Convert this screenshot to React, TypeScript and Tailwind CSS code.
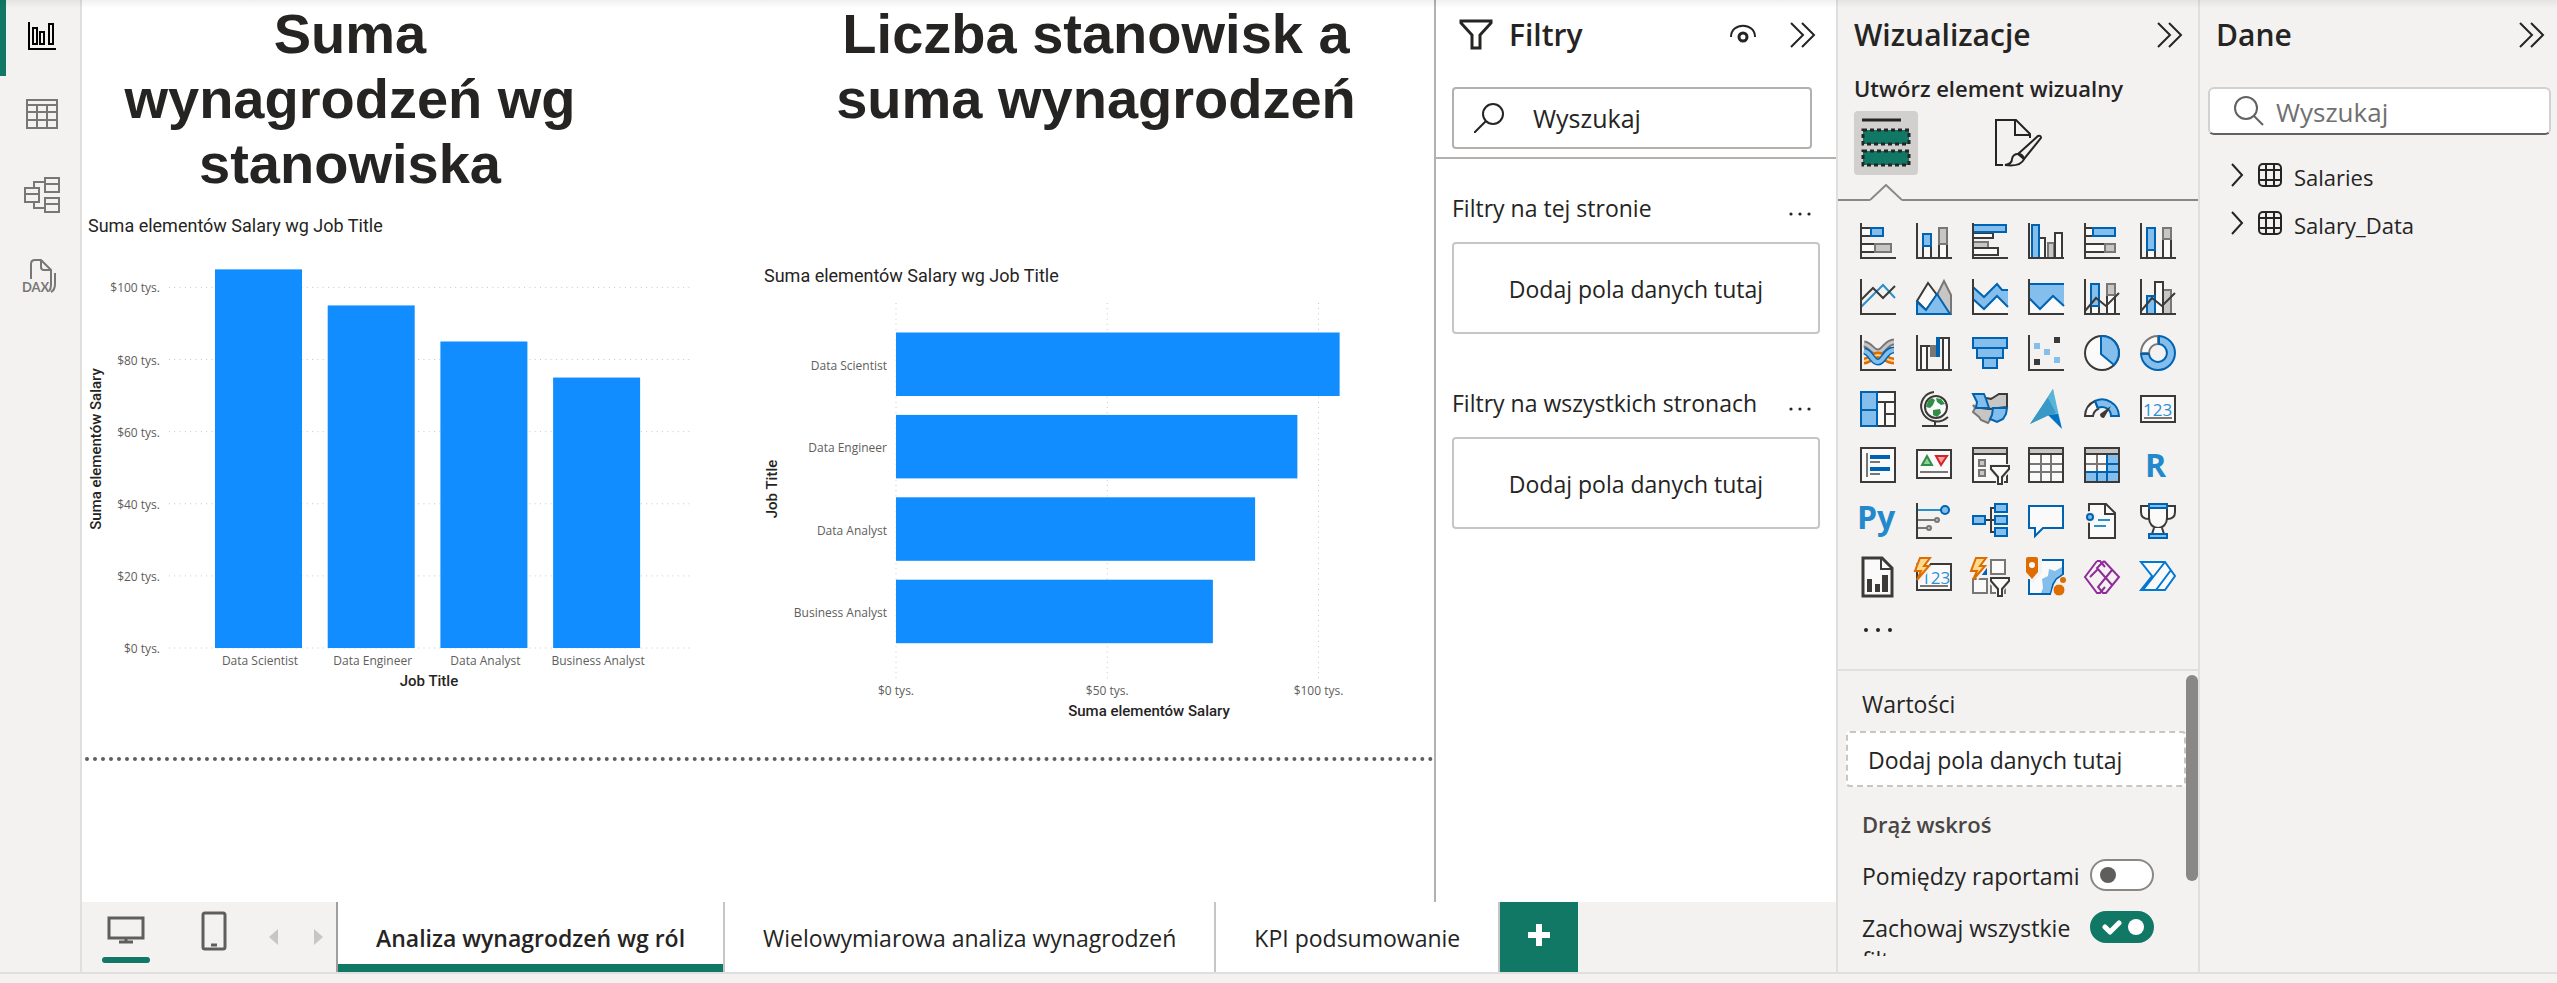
import React from "react";

const DARK = "#3b3a38";
const BLUE = "#0063b1";
const SKY = "#83beec";
const GREY = "#797775";
const SILVER = "#c8c6c4";
const WHITE = "#fafafa";

type Box = [number, number, number, number];

function R({ b, s = DARK, f = WHITE }: { b: Box; s?: string; f?: string }) {
  return <rect x={b[0]} y={b[1]} width={b[2]} height={b[3]} stroke={s} fill={f} strokeWidth={2} />;
}

function L({ d, s = DARK, f = "none", w = 2 }: { d: string; s?: string; f?: string; w?: number }) {
  return <path d={d} stroke={s} fill={f} strokeWidth={w} />;
}

const Axis = () => <L d="M1 0V35H36" />;

const Bolt = () => (
  <>
    <path d="M3 -3H19L13 6H17L4 24L6 12H-2Z" fill="#f3f2f1" />
    <L d="M4 -1H14L8 7H13L1 21L5 12H-1Z" s="#de6c00" f="#ffd98c" />
  </>
);

const Funnel = () => (
  <>
    <path d="M17 17H39V24L32 31V39H24V31L17 24Z" fill="#f3f2f1" />
    <L d="M19 19H37V22L30 30V37H26V30L19 22Z" f={WHITE} />
  </>
);

const Digits = ({ x = 3 }: { x?: number }) => (
  <text x={x} y={25} fill="#2b8fd6" className="font-['Open_Sans',sans-serif] text-[17px]">
    123
  </text>
);

const visuals: [string, React.ReactNode][] = [
  ["Skumulowany wykres słupkowy", <><R b={[1, 5, 10, 8]} /><R b={[11, 5, 12, 8]} s={BLUE} f={SKY} /><R b={[1, 21, 14, 8]} /><R b={[15, 21, 16, 8]} s={GREY} f={SILVER} /><Axis /></>],
  ["Skumulowany wykres kolumnowy", <><R b={[7, 23, 8, 12]} /><R b={[7, 11, 8, 12]} s={BLUE} f={SKY} /><R b={[23, 21, 8, 14]} /><R b={[23, 5, 8, 16]} s={GREY} f={SILVER} /><Axis /></>],
  ["Grupowany wykres słupkowy", <><R b={[1, 10, 20, 5]} /><R b={[1, 19, 15, 6]} s={GREY} f={SILVER} /><R b={[1, 25, 25, 7]} /><R b={[1, 2, 33, 7]} s={BLUE} f={SKY} /><Axis /></>],
  ["Grupowany wykres kolumnowy", <><R b={[11, 15, 6, 20]} /><R b={[20, 20, 6, 15]} s={GREY} f={SILVER} /><R b={[27, 10, 7, 25]} /><R b={[4, 2, 7, 33]} s={BLUE} f={SKY} /><Axis /></>],
  ["Wykres słupkowy 100%", <><R b={[1, 5, 8, 8]} /><R b={[9, 5, 22, 8]} s={BLUE} f={SKY} /><R b={[1, 21, 20, 8]} /><R b={[21, 21, 10, 8]} s={GREY} f={SILVER} /><Axis /></>],
  ["Wykres kolumnowy 100%", <><R b={[7, 27, 8, 8]} /><R b={[7, 5, 8, 22]} s={BLUE} f={SKY} /><R b={[23, 16, 8, 19]} /><R b={[23, 5, 8, 11]} s={GREY} f={SILVER} /><Axis /></>],

  ["Wykres liniowy", <><L d="M1 28L23 6L35 19" s="#2b8fc9" /><L d="M1 21L13 9L23 19L35 7" /><Axis /></>],
  ["Wykres warstwowy", <><L d="M20 18L28 2L35 16V35H20Z" s={GREY} f={SILVER} /><L d="M1 22L12 4L21 16L10 31Z" f={WHITE} /><L d="M1 23L10 31L21 15L34 35H1Z" s={BLUE} f={SKY} /></>],
  ["Skumulowany wykres warstwowy", <><path d="M1 21L12 30L25 17L36 28V35H1Z" fill={WHITE} /><path d="M1 8L12 18L25 5L30 11H36V28L25 17L12 30L1 21Z" fill={SKY} /><L d="M1 8L12 18L25 5L30 11H36M1 20L12 30L25 17L36 28" s={BLUE} /><Axis /></>],
  ["Wykres warstwowy 100%", <><path d="M1 19L12 30L25 17L36 27V35H1Z" fill={WHITE} /><path d="M1 5H36V27L25 17L12 30L1 19Z" fill={SKY} /><L d="M1 5H36M1 19L12 30L25 17L36 27" s={BLUE} /><Axis /></>],
  ["Wykres liniowy i skumulowany kolumnowy", <><R b={[7, 27, 8, 8]} /><R b={[7, 5, 8, 22]} s={BLUE} f={SKY} /><R b={[23, 16, 8, 19]} /><R b={[23, 5, 8, 11]} s={GREY} f={SILVER} /><L d="M1 32L12 19L22 27L35 14" /><Axis /></>],
  ["Wykres liniowy i grupowany kolumnowy", <><R b={[23, 11, 8, 24]} s={GREY} f={SILVER} /><R b={[15, 3, 8, 32]} /><R b={[7, 17, 8, 18]} s={BLUE} f={SKY} /><L d="M1 32L12 19L22 27L35 14" /><Axis /></>],

  ["Wykres wstążkowy", <><L d="M4 9C11 10 12 17 18 17S26 7 34 7" s={GREY} w={7} /><L d="M4 9C11 10 12 17 18 17S26 7 34 7" s={SILVER} w={3} /><L d="M4 26C10 26 12 20 18 20S26 26 34 26" s="#de6c00" w={7} /><L d="M4 26C10 26 12 20 18 20S26 26 34 26" s="#ffd08a" w={2} /><L d="M4 16C11 17 12 27 18 27S25 15 34 15" s={BLUE} w={7} /><L d="M4 16C11 17 12 27 18 27S25 15 34 15" s={SKY} w={4} /><Axis /></>],
  ["Wykres kaskadowy", <><R b={[5, 11, 6, 24]} /><L d="M4 11H15" /><rect x={14} y={10} width={6} height={12} fill={GREY} /><rect x={20} y={2} width={4} height={20} fill={BLUE} /><L d="M24 3H28" /><R b={[27, 3, 6, 32]} /><Axis /></>],
  ["Lejek", <><R b={[1, 3, 34, 10]} s={BLUE} f={SKY} /><R b={[5, 13, 26, 10]} s={BLUE} f={SKY} /><R b={[11, 23, 14, 10]} s={BLUE} f={SKY} /></>],
  ["Wykres punktowy", <><rect x={26} y={2} width={6} height={6} fill={DARK} /><rect x={6} y={8} width={6} height={6} fill={SKY} /><rect x={16} y={14} width={6} height={6} fill={SKY} /><rect x={26} y={22} width={6} height={6} fill={SKY} /><rect x={6} y={24} width={6} height={6} fill={DARK} /><Axis /></>],
  ["Wykres kołowy", <><circle cx={18} cy={18} r={17} fill={WHITE} stroke={DARK} strokeWidth={2} /><L d="M17 1V19L30 30A17 17 0 0 0 17 1Z" s={BLUE} f={SKY} /></>],
  ["Wykres pierścieniowy", <><L d="M1 18A17 17 0 0 1 18 1V9A9 9 0 0 0 9 18Z" s={GREY} f={WHITE} /><L d="M19 1A17 17 0 1 1 1 19H9A9 9 0 1 0 19 9Z" s={BLUE} f={SKY} /></>],

  ["Mapa drzewa", <><R b={[17, 1, 18, 10]} /><R b={[17, 11, 8, 24]} /><R b={[25, 11, 10, 12]} /><R b={[25, 23, 10, 12]} /><R b={[1, 1, 16, 18]} s={BLUE} f={SKY} /><R b={[1, 19, 16, 16]} s={BLUE} f={SKY} /></>],
  ["Mapa", <><circle cx={20} cy={16} r={11} fill={WHITE} stroke={DARK} strokeWidth={2} /><path d="M12 10L16 7L19 9L17 14L14 17L10 16ZM20 7L25 8L29 13L25 14L21 11ZM17 19L24 18L25 22L21 26L17 24Z" fill="#2f8f46" /><L d="M18 1C8 2 3 12 6 20C9 29 22 35 32 26M19 31V34M6 35H32" /></>],
  ["Kartogram", <><L d="M1 14L6 17L18 16L14 8L26 7L27 3H35V16L32 24L20 26L16 32L9 29L7 26L1 21L3 17Z" f={SILVER} s={GREY} /><L d="M14 7L19 8L27 3H35V16L17 18L9 17" f={SILVER} /><L d="M1 3H12L14 8L17 17H4L5 11Z" s={BLUE} f={SKY} /><L d="M21 17H35L34 23L31 28L25 31L18 28L20 24Z" s={BLUE} f={SKY} /></>],
  ["Mapa platformy Azure", <><path d="M25 -2L2 33L21 24Z" fill="#3999c6" /><path d="M25 -2L34 38L20 7Z" fill="#59b4d9" /><path d="M25 -2L20 7L21 24L30 30Z" fill="#59b4d9" /><path d="M30 23L34 38L20 24Z" fill="#0072c6" /><path d="M20 7L2 33L21 24L28 22Z" fill="#3999c6" /></>],
  ["Miernik", <><L d="M1 25A17 17 0 0 1 11 10L14 18A9 9 0 0 0 9 25Z" f={WHITE} /><L d="M11 10A17 17 0 0 1 35 25H27A9 9 0 0 0 14 17Z" s={BLUE} f={SKY} /><path d="M16 23L27 15L20 27Q16 27 16 23Z" fill={DARK} /></>],
  ["Karta", <><R b={[1, 5, 34, 26]} /><Digits /><L d="M4 27H32" s={GREY} /></>],

  ["Karta z wieloma wierszami", <><R b={[1, 1, 34, 34]} /><L d="M7 6V30M10 15H20M10 27H20" s={GREY} /><L d="M10 10H30M10 22H30" s={BLUE} w={4} /></>],
  ["Kluczowy wskaźnik wydajności", <><R b={[1, 3, 34, 28]} /><L d="M6 18L11 9L16 18Z" s="#2f8f46" f="#8fcf9a" /><L d="M20 9H31L25 18Z" s="#d3262b" f="#f5a3a0" /><L d="M4 25H32" s={GREY} /></>],
  ["Fragmentator", <><R b={[1, 1, 34, 34]} /><rect x={2} y={2} width={32} height={5} fill={SILVER} /><L d="M1 7H35" /><R b={[7, 13, 6, 6]} s={GREY} f={SILVER} /><R b={[7, 23, 6, 6]} s={GREY} f={SILVER} /><Funnel /></>],
  ["Tabela", <><R b={[1, 1, 34, 34]} /><rect x={2} y={2} width={32} height={5} fill={SILVER} /><L d="M13 8V34M23 8V34M2 17H34M2 25H34" s={GREY} /><L d="M1 7H35" /></>],
  ["Macierz", <><R b={[1, 1, 34, 34]} /><rect x={2} y={2} width={32} height={5} fill={SILVER} /><path d="M23 8H34V34H2V25H23Z" fill={SKY} /><L d="M13 8V25M2 17H23" s={GREY} /><L d="M23 8V34M2 25H34M13 25V34M23 17H34" s={BLUE} /><L d="M1 7H35" /><rect x={1} y={1} width={34} height={34} fill="none" stroke={DARK} strokeWidth={2} /></>],
  ["Skrypt R", <text x={5} y={30} fill="#2189cc" className="font-['Open_Sans',sans-serif] text-[32px] font-bold">R</text>],

  ["Skrypt Python", <text x={-3} y={26} fill="#2189cc" className="font-['Open_Sans',sans-serif] text-[32px] font-bold">Py</text>],
  ["Kluczowe elementy wpływające", <><L d="M1 7H25" s="#2b8fc9" /><L d="M1 17H20M1 25H12" s={GREY} /><circle cx={29} cy={7} r={4} fill={SKY} stroke={BLUE} strokeWidth={2} /><circle cx={21} cy={17} r={2} fill={SILVER} stroke={GREY} strokeWidth={2} /><circle cx={13} cy={25} r={2} fill={SILVER} stroke={GREY} strokeWidth={2} /><Axis /></>],
  ["Drzewo dekompozycji", <><L d="M14 17H22M22 5H19V29H22" /><R b={[1, 13, 12, 8]} s={BLUE} f={SKY} /><R b={[23, 1, 12, 8]} s={BLUE} f={SKY} /><R b={[23, 13, 12, 8]} s={BLUE} f={SKY} /><R b={[23, 25, 12, 8]} s={BLUE} f={SKY} /></>],
  ["Pytania i odpowiedzi", <L d="M1 3H35V25H15L7 33V25H1Z" s={BLUE} f={WHITE} />],
  ["Narracja", <><L d="M5 1H22L31 10V35H5Z" f={WHITE} /><L d="M21 1V11H31" /><circle cx={6} cy={14} r={6} fill="#f3f2f1" /><circle cx={6} cy={14} r={3} fill={SKY} stroke={BLUE} strokeWidth={2} /><L d="M14 17H26M10 23H22" s="#2b8fc9" /></>],
  ["Metryki", <><L d="M9 3H1V9C1 14 4 16 9 16M27 3H35V9C35 14 32 16 27 16" f={WHITE} /><L d="M9 4V15C9 21 13 25 18 25S27 21 27 15V4Z" f={WHITE} /><L d="M14 25L12 31H24L22 25" f={WHITE} /><R b={[9, 1, 18, 4]} s={BLUE} f={SKY} /><R b={[9, 31, 18, 4]} s={BLUE} f={SKY} /></>],

  ["Raport podzielony na strony", <><L d="M3 -1H22L32 9V37H3Z" f={WHITE} w={3} /><L d="M21 -1V10H32" /><path d="M7 20H12V33H7ZM15 25H20V33H15ZM22 16H28V33H22Z" fill={DARK} /></>],
  ["Karta (nowa)", <><R b={[1, 5, 34, 26]} /><Digits x={5} /><L d="M4 27H32" s={GREY} /><Bolt /></>],
  ["Fragmentator (nowy)", <><R b={[19, 1, 14, 14]} s={GREY} /><R b={[1, 20, 14, 14]} s={GREY} /><R b={[19, 20, 14, 14]} s={GREY} /><rect x={8} y={6} width={7} height={10} fill={BLUE} /><Bolt /><Funnel /></>],
  ["ArcGIS Maps", <><L d="M12 1H35V15L28 20L25 25L22 35H1V20" s={BLUE} f={WHITE} /><path d="M34 8V15L28 19L24 25L22 34H13L15 29L14 20L20 17L21 10L27 12Z" fill={SKY} /><path d="M-3 -3H14V14L5 24L-3 15Z" fill="#f3f2f1" /><path d="M-2 0Q-2 -2 0 -2H8Q10 -2 10 0V13L4 20L-2 13Z" fill="#de6c00" /><circle cx={4} cy={6} r={3} fill={WHITE} /><circle cx={31} cy={31} r={6} fill="#de6c00" stroke="#f3f2f1" strokeWidth={1} /><circle cx={35} cy={21} r={3} fill="#de6c00" /></>],
  ["Power Apps", <><L d="M13 2L1 18L13 34H16L21 28M13 2H16L21 8" s="#8e2c98" f="none" /><L d="M20 2L35 18L22 34H19L14 28L28 11M20 2L13 9L28 26M14 10L6 18" s="#8e2c98" /></>],
  ["Power Automate", <L d="M1 3H25L35 17L25 31H1L12 17ZM25 3L3 31M31 11L16 31" s="#0078d4" f={WHITE} />],
];

const jobs = [
  { name: "Data Scientist", value: 105 },
  { name: "Data Engineer", value: 95 },
  { name: "Data Analyst", value: 85 },
  { name: "Business Analyst", value: 75 },
];

const tick = "font-['Open_Sans',sans-serif] text-[12px]";
const axisTitle = "font-['Roboto',sans-serif] text-[15px] font-medium";

function ColumnChart() {
  const y = (v: number) => 410 - v * 3.606;
  return (
    <svg className="block" width={640} height={462} role="img" aria-label="Suma elementów Salary wg Job Title">
      {[0, 20, 40, 60, 80, 100].map((v) => (
        <g key={v}>
          <line x1={87} x2={608} y1={y(v)} y2={y(v)} stroke="#c8c6c4" strokeDasharray="1 4.3" />
          <text x={78} y={y(v) + 5} textAnchor="end" fill="#605e5c" className={tick}>{`$${v} tys.`}</text>
        </g>
      ))}
      {jobs.map((j, i) => (
        <g key={j.name}>
          <rect x={133 + i * 112.7} y={y(j.value)} width={87} height={410 - y(j.value)} fill="#118dff" />
          <text x={178 + i * 112.7} y={427} textAnchor="middle" fill="#605e5c" className={tick}>{j.name}</text>
        </g>
      ))}
      <text x={347} y={448} textAnchor="middle" fill="#252423" className={axisTitle}>Job Title</text>
      <text transform="translate(19 211) rotate(-90)" textAnchor="middle" fill="#252423" className={axisTitle}>Suma elementów Salary</text>
    </svg>
  );
}

function BarChart() {
  const x = (v: number) => 138 + v * 4.225;
  return (
    <svg className="block" width={640} height={440} role="img" aria-label="Suma elementów Salary wg Job Title">
      {[0, 50, 100].map((v) => (
        <g key={v}>
          <line x1={x(v)} x2={x(v)} y1={15} y2={391} stroke="#c8c6c4" strokeDasharray="1 4.2" />
          <text x={x(v)} y={407} textAnchor="middle" fill="#605e5c" className={tick}>{`$${v} tys.`}</text>
        </g>
      ))}
      {jobs.map((j, i) => (
        <g key={j.name}>
          <rect x={138} y={44.5 + i * 82.4} width={x(j.value) - 138} height={63.5} fill="#118dff" />
          <text x={129} y={82 + i * 82.4} textAnchor="end" fill="#605e5c" className={tick}>{j.name}</text>
        </g>
      ))}
      <text x={391} y={428} textAnchor="middle" fill="#252423" className={axisTitle}>Suma elementów Salary</text>
      <text transform="translate(19 201) rotate(-90)" textAnchor="middle" fill="#252423" className={axisTitle}>Job Title</text>
    </svg>
  );
}

function Chevrons() {
  return (
    <svg width={26} height={26} viewBox="0 0 26 26" fill="none" stroke="#252423" strokeWidth={2}>
      <path d="M1 1L13 13L1 25M12 1L24 13L12 25" />
    </svg>
  );
}

function NavRail() {
  return (
    <nav className="flex w-[82px] shrink-0 flex-col border-r-2 border-[#e1dfdd] bg-[#f3f2f1]">
      <button aria-label="Widok raportu" className="flex h-[76px] items-center border-l-6 border-[#117865] pl-[22px]">
        <svg width={28} height={28} className="-mt-1" fill="none" stroke="#000" strokeWidth={2}>
          <path d="M1 0V27H28M5 6H9V22H5ZM12 10H16V22H12ZM21 2H25V22H21Z" />
        </svg>
      </button>
      <button aria-label="Widok tabeli" className="flex h-[76px] items-center pl-[26px]">
        <svg width={32} height={30} fill="none" stroke="#797775" strokeWidth={2}>
          <path d="M1 1H31V29H1ZM1 6H31M1 13H31M1 21H31M11 6V29M21 6V29" />
        </svg>
      </button>
      <button aria-label="Widok modelu" className="flex h-[86px] items-center pl-6">
        <svg width={36} height={36} fill="none" stroke="#797775" strokeWidth={2}>
          <path d="M1 11H15V25H1ZM1 17H15M21 1H35V15H21ZM21 7H35M21 21H35V35H21ZM21 27H35M10 10V5H21M10 26V31H21" />
        </svg>
      </button>
      <button aria-label="Widok zapytań DAX" className="flex h-[76px] items-center pl-[21px]">
        <svg width={38} height={40} fill="none" stroke="#797775" strokeWidth={2}>
          <path d="M10 23V8Q10 4 14 4H20L30 14V29Q30 33 28 35M20 4V11Q20 14 23 14H30M34 17V28Q34 34 30 36" />
          <text x={1} y={36} fill="#797775" stroke="none" className="font-['Lato',sans-serif] text-[13px] font-bold">DAX</text>
        </svg>
      </button>
    </nav>
  );
}

const heading = "text-center font-['Liberation_Sans',sans-serif] text-[56px] leading-[65px] font-bold text-[#252423] pt-px";
const chartTitle = "font-['Roboto',sans-serif] text-[18px] leading-6 text-[#252423] pl-[6px]";

function Canvas() {
  return (
    <main className="min-w-0 flex-1 overflow-hidden bg-white">
      <div className="grid grid-cols-2">
        <section>
          <h1 className={`${heading} ml-[18px] w-[500px]`}>Suma wynagrodzeń wg stanowiska</h1>
          <h2 className={`${chartTitle} mt-[18px]`}>Suma elementów Salary wg Job Title</h2>
          <ColumnChart />
        </section>
        <section>
          <h1 className={`${heading} ml-[58px] w-[560px]`}>Liczba stanowisk a suma wynagrodzeń</h1>
          <h2 className={`${chartTitle} mt-[133px]`}>Suma elementów Salary wg Job Title</h2>
          <BarChart />
        </section>
      </div>
      <div className="mt-[29px] ml-[3px] border-t-4 border-dotted border-[#605e5c]" />
    </main>
  );
}

function FilterWell({ title, gap }: { title: string; gap: string }) {
  return (
    <section className={gap}>
      <div className="flex items-center justify-between pr-2">
        <h3>{title}</h3>
        <button aria-label={`Więcej opcji: ${title}`} className="flex h-8 items-end pb-2">
          <svg width={24} height={4} fill="#252423">
            <circle cx={3} cy={2} r={1.6} />
            <circle cx={12} cy={2} r={1.6} />
            <circle cx={21} cy={2} r={1.6} />
          </svg>
        </button>
      </div>
      <div className="mt-[18px] flex h-[92px] items-center justify-center rounded-[4px] border-2 border-[#c8c6c4] pt-0.5">
        Dodaj pola danych tutaj
      </div>
    </section>
  );
}

function Filters() {
  return (
    <aside className="w-[402px] shrink-0 border-l-2 border-[#b3b0ad] bg-white text-[23px] leading-8 text-[#252423]">
      <div className="h-[159px] border-b-2 border-[#b3b0ad] pl-4">
        <div className="flex items-center pt-[15px] pr-5">
          <svg className="ml-[7px]" width={34} height={32} fill="none" stroke="#252423" strokeWidth={3}>
            <path d="M2 2H32V4L21 16V29H13V16L2 4Z" />
          </svg>
          <h2 className="ml-4 flex-1 text-[30px] leading-10 font-semibold">Filtry</h2>
          <button aria-label="Pokaż okienko filtrów">
            <svg width={26} height={22} fill="none" stroke="#252423" strokeWidth={2}>
              <path d="M1 13C1 -2 25 -2 25 13" />
              <circle cx={13} cy={13} r={4} strokeWidth={3} />
            </svg>
          </button>
          <button aria-label="Zwiń filtry" className="ml-[34px]"><Chevrons /></button>
        </div>
        <label className="mt-8 flex h-[62px] w-[360px] items-center rounded-[4px] border-2 border-[#b3b0ad] pl-5">
          <svg className="shrink-0" width={30} height={30} fill="none" stroke="#252423" strokeWidth={2}>
            <circle cx={19} cy={11} r={10} />
            <path d="M12 18L0 30" />
          </svg>
          <input aria-label="Wyszukaj filtry" placeholder="Wyszukaj" className="ml-[29px] w-full min-w-0 bg-transparent text-[25px] outline-none placeholder:text-[#252423]" />
        </label>
      </div>
      <div className="pr-4 pl-4">
        <FilterWell title="Filtry na tej stronie" gap="mt-[33px]" />
        <FilterWell title="Filtry na wszystkich stronach" gap="mt-[53px]" />
      </div>
    </aside>
  );
}

function PageTabs() {
  return (
    <footer className="flex h-[70px] bg-[#f3f2f1] text-[23px] text-[#252423]">
      <div className="flex w-[254px] shrink-0">
        <button aria-label="Układ pulpitu" className="ml-5 flex w-12 flex-col items-center pt-3.5">
          <svg width={38} height={28} fill="none" stroke="#605e5c" strokeWidth={3}>
            <path d="M2 2H36V22H2ZM19 22V27M12 26H26" />
          </svg>
          <span className="mt-[13px] h-1.5 w-12 rounded-full bg-[#117865]" />
        </button>
        <button aria-label="Układ mobilny" className="ml-[51px] h-[58px]">
          <svg width={26} height={40} fill="none" stroke="#605e5c" strokeWidth={3}>
            <rect x={2} y={2} width={22} height={36} rx={2} />
            <path d="M10 34H16" />
          </svg>
        </button>
        <button aria-label="Poprzednia strona" className="ml-[42px] h-[70px]">
          <svg width={9} height={16} fill="#c8c6c4"><path d="M9 0V16L0 8Z" /></svg>
        </button>
        <button aria-label="Następna strona" className="ml-9 h-[70px]">
          <svg width={9} height={16} fill="#c8c6c4"><path d="M0 0V16L9 8Z" /></svg>
        </button>
      </div>
      <button className="border-l-2 border-[#a19f9d] bg-white">
        <span className="flex h-[70px] items-center border-b-8 border-[#117865] px-[38px] pt-2.5 font-semibold">Analiza wynagrodzeń wg ról</span>
      </button>
      <button className="border-l-2 border-[#c8c6c4] bg-white px-[38px] pt-0.5">Wielowymiarowa analiza wynagrodzeń</button>
      <button className="border-x-2 border-[#c8c6c4] bg-white px-[38px] pt-0.5">KPI podsumowanie</button>
      <button aria-label="Nowa strona" className="flex w-[78px] items-center justify-center bg-[#117865] pb-1">
        <svg width={22} height={22} stroke="#fff" strokeWidth={6}><path d="M11 0V22M0 11H22" /></svg>
      </button>
    </footer>
  );
}

function Toggle({ label, on, gap }: { label: string; on: boolean; gap: string }) {
  return (
    <label className={`flex items-start justify-between ${gap}`}>
      <span className="flex-1 pt-px">{label}</span>
      <span className="relative flex shrink-0">
        <input
          type="checkbox"
          role="switch"
          defaultChecked={on}
          className="flex h-8 w-16 appearance-none items-center rounded-full border-2 border-[#8a8886] bg-white px-2 before:size-4 before:rounded-full before:bg-[#605e5c] checked:justify-end checked:border-[#117865] checked:bg-[#117865] checked:before:bg-white"
        />
        {on && (
          <svg className="absolute top-2 left-3" width={20} height={16} fill="none" stroke="#fff" strokeWidth={5} strokeLinecap="round" strokeLinejoin="round">
            <path d="M3 8L8 13L17 4" />
          </svg>
        )}
      </span>
    </label>
  );
}

function Visualizations() {
  return (
    <aside className="flex w-[364px] shrink-0 flex-col border-x-2 border-[#e1dfdd] bg-[#f3f2f1] text-[23px] leading-8 text-[#252423]">
      <div className="flex items-center justify-between pt-[15px] pr-[15px] pl-4">
        <h2 className="text-[30px] leading-10 font-semibold">Wizualizacje</h2>
        <button aria-label="Zwiń wizualizacje"><Chevrons /></button>
      </div>
      <h3 className="mt-[17px] pl-4 text-[22px] font-semibold">Utwórz element wizualny</h3>
      <div className="mt-[7px] flex gap-[68px] pl-4">
        <button aria-label="Utwórz element wizualny" className="flex size-16 items-center justify-center rounded-[4px] bg-[#d2d0ce]">
          <svg width={50} height={50} fill="#117865" stroke="#252423">
            <path d="M1 2H40" strokeWidth={3} />
            <rect x={2} y={12} width={46} height={14} strokeWidth={3} strokeDasharray="4 3" />
            <rect x={2} y={33} width={46} height={14} strokeWidth={3} strokeDasharray="4 3" />
          </svg>
        </button>
        <button aria-label="Formatuj element wizualny" className="flex size-16 items-center pl-2">
          <svg width={50} height={50} fill="none" stroke="#252423" strokeWidth={2}>
            <path d="M9 47H2V2H22L36 16V20M21 2V17H36" />
            <path d="M24 36L44 18Q47 17 47 20L30 41Z" />
            <path d="M24 36Q29 36 30 41Q27 49 11 47Q18 46 18 41Q19 36 24 36Z" />
          </svg>
        </button>
      </div>
      <div className="mt-[9px] flex items-end">
        <div className="w-8 border-b-2 border-[#8a8886]" />
        <svg width={32} height={17} fill="none" stroke="#8a8886" strokeWidth={2}><path d="M0 16L16 1L32 16" /></svg>
        <div className="flex-1 border-b-2 border-[#8a8886]" />
      </div>
      <div className="mt-[22px] grid grid-cols-[repeat(6,36px)] gap-5 pl-[22px]">
        {visuals.map(([name, art]) => (
          <button key={name} aria-label={name} className="size-9">
            <svg width={36} height={36} viewBox="0 0 36 36" className="block overflow-visible">{art}</svg>
          </button>
        ))}
      </div>
      <button aria-label="Pobierz więcej wizualizacji" className="mt-5 ml-6 flex h-[30px] w-9 items-center">
        <svg width={34} height={6} fill="#252423">
          <circle cx={4} cy={3} r={2} />
          <circle cx={16} cy={3} r={2} />
          <circle cx={28} cy={3} r={2} />
        </svg>
      </button>
      <div className="relative mt-6 mb-4 h-0 flex-1 overflow-hidden border-t-2 border-[#e1dfdd] pt-[17px] pr-3 pl-2">
        <h4 className="pl-4">Wartości</h4>
        <div className="mt-[11px] flex h-14 items-center rounded-[4px] border-2 border-dashed border-[#c8c6c4] bg-white pt-0.5 pl-5">
          Dodaj pola danych tutaj
        </div>
        <div className="pr-8 pl-4">
          <h4 className="mt-[21px] text-[22px] font-semibold text-[#484644]">Drąż wskroś</h4>
          <Toggle label="Pomiędzy raportami" on={false} gap="mt-[19px]" />
          <Toggle label="Zachowaj wszystkie filtry" on={true} gap="mt-[19px]" />
        </div>
        <div className="absolute top-1 right-0 h-[206px] w-3 rounded-full bg-[#8a8886]" />
      </div>
    </aside>
  );
}

function DataPane() {
  return (
    <aside className="w-[357px] shrink-0 bg-[#f3f2f1] text-[#252423]">
      <div className="flex items-center justify-between pt-[15px] pr-3 pl-4">
        <h2 className="text-[30px] leading-10 font-semibold">Dane</h2>
        <button aria-label="Zwiń dane"><Chevrons /></button>
      </div>
      <label className="mt-8 mr-1.5 ml-2 flex h-12 items-center rounded-[6px] border-2 border-[#d1d1d1] border-b-[#616161] bg-white pl-6">
        <svg className="shrink-0" width={30} height={30} fill="none" stroke="#616161" strokeWidth={2}>
          <circle cx={12} cy={12} r={11} />
          <path d="M20 20L29 29" />
        </svg>
        <input aria-label="Wyszukaj dane" placeholder="Wyszukaj" className="ml-3 w-full min-w-0 bg-transparent pt-0.5 text-[26px] leading-8 outline-none placeholder:text-[#707070]" />
      </label>
      <ul className="mt-4">
        {["Salaries", "Salary_Data"].map((name) => (
          <li key={name}>
            <button className="flex h-12 items-center pl-[30px] text-[22px] leading-8">
              <svg width={14} height={24} fill="none" stroke="#252423" strokeWidth={2}><path d="M2 1L12 12L2 23" /></svg>
              <svg className="ml-[14px]" width={24} height={24} fill="none" stroke="#252423" strokeWidth={2}>
                <rect x={1} y={1} width={22} height={22} rx={4} />
                <path d="M1 7H23M1 17H23M8 1V23M16 1V23" />
              </svg>
              <span className="ml-3 pt-1">{name}</span>
            </button>
          </li>
        ))}
      </ul>
    </aside>
  );
}

export default function App() {
  return (
    <div className="relative flex h-screen flex-col overflow-hidden bg-[#f3f2f1] font-['Open_Sans',sans-serif]">
      <div className="flex min-h-0 flex-1">
        <NavRail />
        <div className="flex min-w-0 flex-1 flex-col">
          <div className="flex min-h-0 flex-1">
            <Canvas />
            <Filters />
          </div>
          <PageTabs />
        </div>
        <Visualizations />
        <DataPane />
      </div>
      <div className="h-[11px] shrink-0 border-t-2 border-[#e1dfdd]" />
      <div className="pointer-events-none absolute inset-x-0 top-0 h-2 bg-linear-to-b from-black/6 to-transparent" />
    </div>
  );
}
